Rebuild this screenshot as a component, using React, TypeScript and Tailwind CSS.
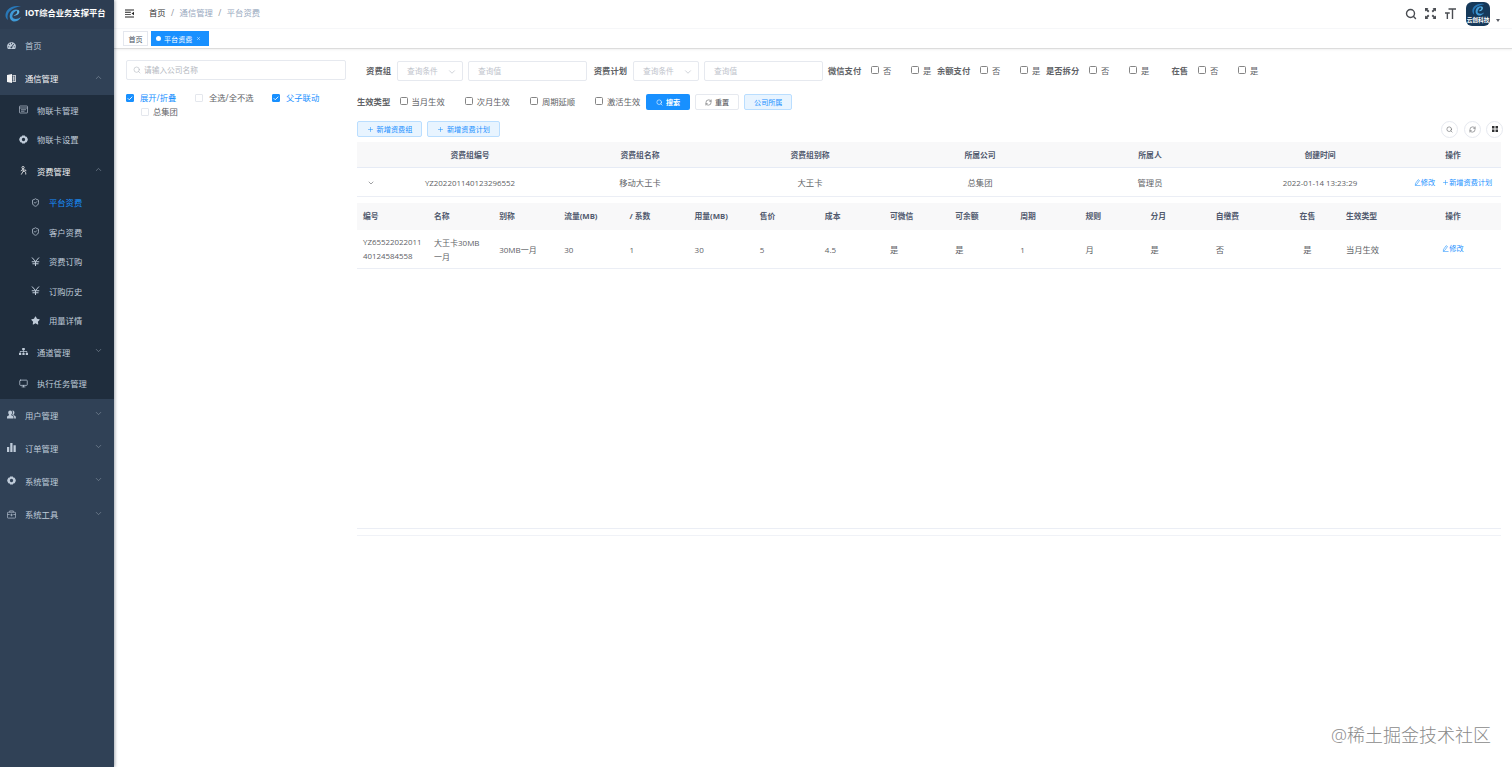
import React from 'react';
import {
  Check,
  ChevronDown,
  ChevronUp,
  Monitor,
  Plus,
  RefreshCw,
  Search,
  ShieldCheck,
  X,
} from 'lucide-react';
import { FaSitemap, FaStar } from 'react-icons/fa';

type IconProps = { className?: string };

const DashboardIcon: React.FC<IconProps> = ({ className }) => (
  <svg viewBox="0 0 20 18" className={className} fill="currentColor">
    <path
      fillRule="evenodd"
      d="M10 1a10 10 0 0 0-8 15.5h16A10 10 0 0 0 10 1ZM9 3h2v3H9ZM4 6l1.5-1.3 2 2L6 8ZM2 11h3v2H2ZM15 11h3v2h-3ZM14.5 5l1.3 1.3-4.3 6a2 2 0 1 1-1.4-1Z"
    />
  </svg>
);

const DoorIcon: React.FC<IconProps> = ({ className }) => (
  <svg viewBox="0 0 18 18" className={className} fill="currentColor">
    <path d="M0 2 10 0v18L0 16Z" />
    <path d="M11 2h6.5v14H11v-1.300h5V3.300h-5Z" />
    <path d="M11.500 4.500H15v9h-3.500Z" opacity=".75" />
  </svg>
);

const CardIcon: React.FC<IconProps> = ({ className }) => (
  <svg
    viewBox="0 0 18 16"
    className={className}
    fill="none"
    stroke="currentColor"
    strokeWidth="1.3"
  >
    <rect x="1" y="1" width="16" height="14" rx="1" />
    <path d="M1 5h16M4 8.5h10M4 11.5h7" />
  </svg>
);

const GearIcon: React.FC<IconProps> = ({ className }) => (
  <svg viewBox="0 0 20 20" className={className} fill="currentColor">
    <path
      fillRule="evenodd"
      d="M7 1h6l1 2.5 3 .3 2.5 5V11L17 16l-3 .5-1 2.5H7l-1-2.5L3 16 .5 11V9L3 3.8l3-.3ZM10 6.300a3.700 3.700 0 1 0 0 7.400 3.700 3.700 0 0 0 0-7.400Z"
    />
  </svg>
);

const PersonIcon: React.FC<IconProps> = ({ className }) => (
  <svg
    viewBox="0 0 18 20"
    className={className}
    fill="none"
    stroke="currentColor"
    strokeWidth="1.800"
  >
    <circle cx="8" cy="3.500" r="2.500" />
    <path d="M8 6v6M7.500 7.500 3 11M8 9h6v3M8 12l-4 7M8 12h3l3 3v4" />
  </svg>
);

const YenIcon: React.FC<IconProps> = ({ className }) => (
  <svg
    viewBox="0 0 18 18"
    className={className}
    fill="none"
    stroke="currentColor"
    strokeWidth="2"
  >
    <path d="m2 1 7 8 7-8M9 9v9M1.500 9.500h15M3 13.500h12" />
  </svg>
);

const PeoplesIcon: React.FC<IconProps> = ({ className }) => (
  <svg viewBox="0 0 20 18" className={className} fill="currentColor">
    <path d="M7 0a4.300 4.300 0 0 1 4.300 4.500c0 2-.9 3.800-1.800 4.600v1.400l4.500 2.500c.5.500.5 5 .5 5H0s0-4.500.5-5l4-2.500V9.100C3.500 8.300 2.700 6.500 2.700 4.500A4.300 4.300 0 0 1 7 0Z" />
    <path d="M12 0c3-.5 4.500 2 4.500 4.500 0 2-1 3.500-1.800 4.200v1.500L19 13c.8.600.8 5 .8 5H16c0-2 0-5-1-6l-3.500-2c1-1.500 1.500-3 1.500-5.200 0-1.500-.3-3.800-1-4.800Z" />
  </svg>
);

const BarsIcon: React.FC<IconProps> = ({ className }) => (
  <svg viewBox="0 0 18 18" className={className} fill="currentColor">
    <path d="M0 8h4.500v10H0ZM6.500 0H11v18H6.500ZM13 4.500h4.500V18H13Z" />
  </svg>
);

const ToolIcon: React.FC<IconProps> = ({ className }) => (
  <svg
    viewBox="0 0 20 18"
    className={className}
    fill="none"
    stroke="currentColor"
    strokeWidth="1.4"
  >
    <rect x="1" y="4" width="18" height="13" rx="1.500" />
    <path d="M6 4V1h8v3M1 9h5M14 9h5M7 10h6M10 7v6" />
  </svg>
);

const HamburgerIcon: React.FC<IconProps> = ({ className }) => (
  <svg viewBox="0 0 20 18" className={className} fill="currentColor">
    <path d="M0 0h20v2.200H0ZM0 5.300h13v2H0ZM0 10.600h13v2H0ZM0 15.800h20V18H0ZM20 5v8l-5.500-4Z" />
  </svg>
);

const FullscreenIcon: React.FC<IconProps> = ({ className }) => (
  <svg viewBox="0 0 22 22" className={className} fill="currentColor">
    <path d="M0 0h7L4.800 2.200l4 4-2.600 2.600-4-4L0 7ZM22 0v7l-2.200-2.200-4 4-2.600-2.600 4-4L15 0ZM0 22v-7l2.200 2.200 4-4 2.600 2.600-4 4L7 22ZM22 22h-7l2.200-2.200-4-4 2.600-2.600 4 4L22 15Z" />
  </svg>
);

const FontSizeIcon: React.FC<IconProps> = ({ className }) => (
  <svg
    viewBox="0 0 22 22"
    className={className}
    fill="none"
    stroke="currentColor"
    strokeWidth="2.800"
  >
    <path d="M7 2h15M15 2v20M0 10h9.500M4.700 10v12" />
  </svg>
);

const EditIcon: React.FC<IconProps> = ({ className }) => (
  <svg
    viewBox="0 0 16 16"
    className={className}
    fill="none"
    stroke="currentColor"
    strokeWidth="1.300"
  >
    <path d="m9.500 1.500 3 2-6 8.500-3.500 1.500.5-3.500ZM2 15h13" />
  </svg>
);

const GridIcon: React.FC<IconProps> = ({ className }) => (
  <svg viewBox="0 0 12 12" className={className} fill="currentColor">
    <path d="M0 0h5v5H0ZM7 0h5v5H7ZM0 7h5v5H0ZM7 7h5v5H7Z" />
  </svg>
);

const BrandIcon: React.FC<IconProps> = ({ className }) => (
  <svg viewBox="0 0 34 34" className={className} fill="none">
    <path
      d="M32 3C22 0 11 3 5 10c-6 8-5 16 1 20-2-7-1-13 4-18C15 7 22 4 32 3Z"
      fill="#2878b8"
    />
    <path
      d="M27 10c-6-3-13 0-16 6-4 8 0 16 7 17 6 0 11-3 14-9-5 4-11 5-15 3-3-2-3-6-1-9 2-4 6-7 11-8Z"
      fill="#3f9ad6"
    />
    <path
      d="M27 10c3 2 2 6-1 9-3 2-6 3-9 2 3-1 6-3 7-5 1-3 0-5-3-5Z"
      fill="#5cb4e4"
    />
  </svg>
);

type MenuItem = {
  label: string;
  icon: React.FC<IconProps>;
  level: number;
  arrow?: 'up' | 'down';
  active?: boolean;
};

const topMenu: MenuItem[] = [
  { label: '首页', icon: DashboardIcon, level: 0 },
  { label: '通信管理', icon: DoorIcon, level: 0, arrow: 'up' },
];

const subMenu: MenuItem[] = [
  { label: '物联卡管理', icon: CardIcon, level: 1 },
  { label: '物联卡设置', icon: GearIcon, level: 1 },
  { label: '资费管理', icon: PersonIcon, level: 1, arrow: 'up' },
  { label: '平台资费', icon: ShieldCheck, level: 2, active: true },
  { label: '客户资费', icon: ShieldCheck, level: 2 },
  { label: '资费订购', icon: YenIcon, level: 2 },
  { label: '订购历史', icon: YenIcon, level: 2 },
  { label: '用量详情', icon: FaStar, level: 2 },
  { label: '通道管理', icon: FaSitemap, level: 1, arrow: 'down' },
  { label: '执行任务管理', icon: Monitor, level: 1 },
];

const bottomMenu: MenuItem[] = [
  { label: '用户管理', icon: PeoplesIcon, level: 0, arrow: 'down' },
  { label: '订单管理', icon: BarsIcon, level: 0, arrow: 'down' },
  { label: '系统管理', icon: GearIcon, level: 0, arrow: 'down' },
  { label: '系统工具', icon: ToolIcon, level: 0, arrow: 'down' },
];

const levelPadding = ['pl-[7px]', 'pl-[19px]', 'pl-[31px]'];

const MenuRow: React.FC<{ item: MenuItem }> = ({ item }) => {
  const Icon = item.icon;
  const Arrow = item.arrow === 'up' ? ChevronUp : ChevronDown;
  const tall = item.level === 0 || item.arrow;
  const color =
    item.arrow === 'up'
      ? 'text-[#f4f4f5]'
      : item.active
        ? 'text-[#1890ff]'
        : 'text-[#bfcbd9]';

  return (
    <div
      className={`flex items-center pt-px pr-[11px] ${tall ? 'h-[33.2px]' : 'h-[29.6px]'} ${levelPadding[item.level]} ${color}`}
    >
      <Icon
        className={`w-[9px] h-[9px] shrink-0 -mt-0.5 ${item.active ? 'text-[#bfcbd9]' : ''}`}
      />
      <span className="ml-[9px] flex-1 whitespace-nowrap">{item.label}</span>
      {item.arrow && (
        <Arrow
          className="w-[9px] h-[9px] -mt-[4px] text-[#8793a3]"
          strokeWidth={1.6}
        />
      )}
    </div>
  );
};

const Sidebar: React.FC = () => (
  <aside className="w-[114px] h-full shrink-0 bg-[#304156] shadow-[1px_0_3px_rgba(0,21,41,0.35)] z-10">
    <div className="h-[29px] flex items-center pl-[5px] pb-[3px] bg-[#2d3d52]">
      <BrandIcon className="w-[17px] h-[17px] shrink-0" />
      <span className="ml-[3px] text-[8.3px] font-bold text-white whitespace-nowrap">
        IOT综合业务支撑平台
      </span>
    </div>
    {topMenu.map((item) => (
      <MenuRow key={item.label} item={item} />
    ))}
    <div className="bg-[#1f2d3d]">
      {subMenu.map((item) => (
        <MenuRow key={item.label} item={item} />
      ))}
    </div>
    {bottomMenu.map((item) => (
      <MenuRow key={item.label} item={item} />
    ))}
  </aside>
);

const Navbar: React.FC = () => (
  <header className="h-[29px] shrink-0 flex items-center pl-[11px] pb-px border-b border-[#f7f8fa]">
    <HamburgerIcon className="w-[9px] h-[9px] text-[#222]" />
    <div className="ml-[15px] flex items-center text-[#97a8be] -mt-px">
      <span className="text-[#303133]">首页</span>
      <span className="w-[14px] text-center text-[#909399]">/</span>
      <span>通信管理</span>
      <span className="w-[14px] text-center text-[#909399]">/</span>
      <span>平台资费</span>
    </div>
    <div className="ml-auto flex items-center text-[#4a4d52]">
      <Search className="w-3 h-3" strokeWidth={2.8} />
      <FullscreenIcon className="ml-2 w-[11px] h-[11px]" />
      <FontSizeIcon className="ml-[9px] w-[11px] h-[11px]" />
      <div className="ml-[10px] w-6 h-6 rounded-[6px] bg-[#16395a] flex flex-col items-center overflow-hidden">
        <BrandIcon className="w-[13px] h-[13px] mt-px shrink-0" />
        <span className="text-[5.7px] leading-[8px] font-bold text-white whitespace-nowrap">
          云创科技
        </span>
      </div>
    </div>
    <span className="ml-[5px] mr-[2px] mt-[14px] w-[15px] shrink-0">
      <span className="block w-0 border-x-[2px] border-t-[3px] border-x-transparent border-t-[#5a5e66] ml-px" />
    </span>
  </header>
);

const TagsView: React.FC = () => (
  <div className="h-5 shrink-0 flex items-start pt-[2px] pl-[9px] gap-[3px] border-b border-[#dcdcdc] shadow-[0_1px_2px_rgba(0,0,0,0.06)] text-[7.100px]">
    <span className="h-[15px] w-[25px] flex items-center justify-center border border-[#e4e7ee] text-[#495060]">
      首页
    </span>
    <span className="h-[15px] w-[58px] flex items-center pl-[5px] bg-[#1890ff] text-white whitespace-nowrap">
      <i className="w-[5px] h-[5px] rounded-full bg-white mr-[3px]" />
      平台资费
      <X className="ml-[4px] w-[5px] h-[5px]" />
    </span>
  </div>
);

const Box: React.FC<{ checked?: boolean }> = ({ checked }) => (
  <span
    className={`w-[8px] h-[8px] shrink-0 rounded-[1px] border flex items-center justify-center ${checked ? 'bg-[#1890ff] border-[#1890ff]' : 'bg-white border-[#e4e7ed]'}`}
  >
    {checked && <Check className="w-[7px] h-[7px] text-white" strokeWidth={3.5} />}
  </span>
);

const CompanyTree: React.FC = () => (
  <section className="w-[220px] shrink-0">
    <div className="h-5 border border-[#e6e9ef] rounded-[2px] flex items-center pl-[6px] text-[#b4b8c0] text-[7.700px]">
      <Search className="w-[8px] h-[8px] mr-[3px]" strokeWidth={1.8} />
      请输入公司名称
    </div>
    <div className="flex items-center mt-[11px] h-[14px] text-[#606266]">
      <div className="w-[69px] flex items-center gap-[6px] text-[#1890ff] whitespace-nowrap">
        <Box checked />
        展开/折叠
      </div>
      <div className="w-[77px] flex items-center gap-[6px] whitespace-nowrap">
        <Box />
        全选/全不选
      </div>
      <div className="flex items-center gap-[6px] text-[#1890ff] whitespace-nowrap">
        <Box checked />
        父子联动
      </div>
    </div>
    <div className="flex items-center gap-[4px] h-[14px] pl-[15px] text-[#606266]">
      <Box />
      总集团
    </div>
  </section>
);

const NativeBox: React.FC<{ label: string; className: string }> = ({
  label,
  className,
}) => (
  <label className={`flex items-center shrink-0 ${className}`}>
    <span className="w-[8px] h-[8px] mr-[4px] -mt-[2px] rounded-[1.500px] border border-[#858585] bg-white" />
    {label}
  </label>
);

const QueryPair: React.FC = () => (
  <>
    <div className="ml-[6px] w-[66px] h-5 border border-[#e6e9ef] rounded-[2px] flex items-center justify-between pl-[9px] pr-[5px] text-[#c0c4cc] text-[7.700px]">
      查询条件
      <ChevronDown className="w-[10px] h-[10px] mt-[2px]" strokeWidth={1.8} />
    </div>
    <div className="ml-[5px] w-[119px] h-5 border border-[#e6e9ef] rounded-[2px] flex items-center pl-[9px] text-[#c0c4cc] text-[7.700px]">
      查询值
    </div>
  </>
);

const FilterForm: React.FC = () => (
  <div className="text-[#606266] whitespace-nowrap">
    <div className="flex items-center h-5 mt-px">
      <span className="w-[34px] text-right font-bold">资费组</span>
      <QueryPair />
      <span className="w-[40px] text-right font-bold">资费计划</span>
      <QueryPair />
      <div className="flex ml-[5px]">
        {['微信支付', '余额支付', '是否拆分', '在售'].map((name) => (
          <div key={name} className="flex items-center w-[109px]">
            <span className="w-[33px] mr-[10px] text-right font-bold">
              {name}
            </span>
            <NativeBox label="否" className="w-[40px]" />
            <NativeBox label="是" className="w-[26px]" />
          </div>
        ))}
      </div>
    </div>
    <div className="flex items-center h-4 mt-[13px]">
      <span className="w-[33px] mr-[9.500px] font-bold">生效类型</span>
      {['当月生效', '次月生效', '周期延顺', '激活生效'].map((name) => (
        <NativeBox key={name} label={name} className="w-[65.200px]" />
      ))}
      <div className="flex gap-[5.500px] -ml-[14px] text-[7.100px] shrink-0">
        <button className="w-[43.500px] h-4 rounded-[2px] bg-[#1890ff] text-white font-bold flex items-center justify-center gap-[3px]">
          <Search className="w-[7px] h-[7px]" />
          搜索
        </button>
        <button className="w-[43.500px] h-4 rounded-[2px] border border-[#e6e9ef] flex items-center justify-center gap-[3px] font-medium">
          <RefreshCw className="w-[7px] h-[7px]" />
          重置
        </button>
        <button className="w-[48px] h-4 rounded-[2px] border border-[#badeff] bg-[#e8f4ff] text-[#1890ff]">
          公司所属
        </button>
      </div>
    </div>
  </div>
);

const Toolbar: React.FC = () => (
  <div className="flex items-center mt-[11px] h-4 text-[7.200px] whitespace-nowrap">
    <button className="w-[65px] h-4 rounded-[2px] border border-[#badeff] bg-[#e8f4ff] text-[#1890ff] flex items-center justify-center gap-[3px]">
      <Plus className="w-[7px] h-[7px]" strokeWidth={1.8} />
      新增资费组
    </button>
    <button className="ml-[5px] w-[73px] h-4 rounded-[2px] border border-[#badeff] bg-[#e8f4ff] text-[#1890ff] flex items-center justify-center gap-[3px]">
      <Plus className="w-[7px] h-[7px]" strokeWidth={1.8} />
      新增资费计划
    </button>
    <div className="ml-auto -mr-[2px] flex gap-[5.500px] text-[#606266]">
      <span className="w-[17px] h-[17px] rounded-full border border-[#e6e9ef] flex items-center justify-center">
        <Search className="w-[7px] h-[7px]" />
      </span>
      <span className="w-[17px] h-[17px] rounded-full border border-[#e6e9ef] flex items-center justify-center">
        <RefreshCw className="w-[7px] h-[7px]" />
      </span>
      <span className="w-[17px] h-[17px] rounded-full border border-[#e6e9ef] flex items-center justify-center">
        <GridIcon className="w-[6px] h-[6px] text-[#303133]" />
      </span>
    </div>
  </div>
);

const planColumns: { title: string; value: string; center?: boolean }[] = [
  { title: '名称', value: '大王卡30MB 一月' },
  { title: '别称', value: '30MB一月' },
  { title: '流量(MB)', value: '30' },
  { title: '/ 系数', value: '1' },
  { title: '用量(MB)', value: '30' },
  { title: '售价', value: '5' },
  { title: '成本', value: '4.5' },
  { title: '可微信', value: '是' },
  { title: '可余额', value: '是' },
  { title: '周期', value: '1' },
  { title: '规则', value: '月' },
  { title: '分月', value: '是' },
  { title: '自缴费', value: '否' },
  { title: '在售', value: '是', center: true },
  { title: '生效类型', value: '当月生效' },
];

const groupGrid = 'grid grid-cols-[28px_repeat(6,170px)_1fr] items-center text-center';
const planGrid = 'grid grid-cols-[71px_repeat(15,65.15px)_1fr] items-center';

const EditLink: React.FC = () => (
  <a className="inline-flex items-center text-[#1890ff] text-[7.200px]">
    <EditIcon className="w-[7px] h-[7px]" />
    修改
  </a>
);

const TariffTable: React.FC = () => (
  <div className="mt-[5px] h-[387px] border-b border-[#ebeef5] text-[#606266]">
    <div
      className={`${groupGrid} h-[26px] bg-[#f8f8f9] border-b border-[#e6ebf5] text-[7.800px] font-bold text-[#515a6e]`}
    >
      <span />
      <span>资费组编号</span>
      <span>资费组名称</span>
      <span>资费组别称</span>
      <span>所属公司</span>
      <span>所属人</span>
      <span>创建时间</span>
      <span>操作</span>
    </div>
    <div className={`${groupGrid} h-[29px] pt-px border-b border-[#ebeef5]`}>
      <ChevronDown className="w-[8px] h-[8px] mx-auto" strokeWidth={1.8} />
      <span className="text-[7.900px]">YZ202201140123296552</span>
      <span>移动大王卡</span>
      <span>大王卡</span>
      <span>总集团</span>
      <span>管理员</span>
      <span className="text-[7.900px]">2022-01-14 13:23:29</span>
      <span className="flex items-center justify-center gap-[7px] -mt-px whitespace-nowrap">
        <EditLink />
        <a className="inline-flex items-center text-[#1890ff] text-[7.200px]">
          <Plus className="w-[7px] h-[7px]" strokeWidth={1.8} />
          新增资费计划
        </a>
      </span>
    </div>
    <div
      className={`${planGrid} mt-[6px] h-[27px] pb-px bg-[#f8f8f9] text-[7.800px] font-bold text-[#515a6e]`}
    >
      <span className="pl-[6px]">编号</span>
      {planColumns.map((col) => (
        <span
          key={col.title}
          className={`whitespace-nowrap ${col.center ? 'text-center' : 'pl-[6px]'} ${/MB/.test(col.title) ? 'tracking-[-0.050px]' : ''}`}
        >
          {col.title}
        </span>
      ))}
      <span className="text-center">操作</span>
    </div>
    <div
      className={`${planGrid} h-[39px] pt-px border-b border-[#ebeef5] leading-[13.600px] text-[8px]`}
    >
      <span className="pl-[6px] text-[7.900px]">
        YZ65522022011
        <br />
        40124584558
      </span>
      {planColumns.map((col) => (
        <span
          key={col.title}
          className={`${col.center ? 'text-center' : 'pl-[6px]'} ${/\d/.test(col.value) ? '' : 'text-[8.300px]'} break-keep`}
        >
          {col.value}
        </span>
      ))}
      <span className="text-center -mt-px">
        <EditLink />
      </span>
    </div>
  </div>
);

const App: React.FC = () => {
  return (
    <div
      lang="zh-CN"
      className="relative w-full h-screen overflow-hidden flex bg-white text-[8.300px] leading-[14px] font-['Open_Sans','Noto_Sans_CJK_SC',sans-serif]"
    >
      <Sidebar />
      <div className="flex-1 min-w-0 flex flex-col">
        <Navbar />
        <TagsView />
        <main className="flex flex-1 pt-[11px] pl-3 pr-[11px]">
          <CompanyTree />
          <section className="flex-1 min-w-0 ml-[11px]">
            <FilterForm />
            <Toolbar />
            <TariffTable />
            <div className="h-[7px] border-b border-[#f0f2f7]" />
          </section>
        </main>
      </div>
      <div className="absolute right-[21px] bottom-[19px] text-[18px] leading-[26px] font-light text-[#8a8a8a]">
        @稀土掘金技术社区
      </div>
    </div>
  );
};

export default App;
